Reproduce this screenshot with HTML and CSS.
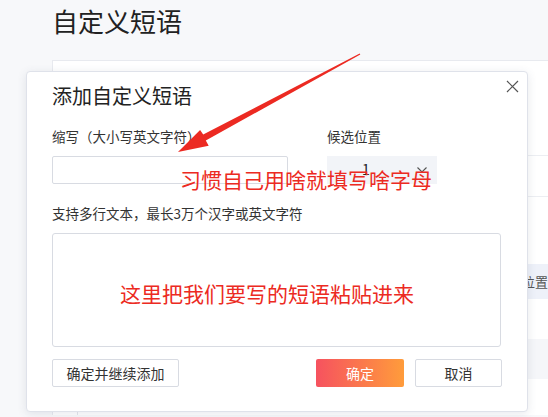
FILE: index.html
```html
<!DOCTYPE html>
<html lang="zh-CN">
<head>
<meta charset="utf-8">
<title>自定义短语</title>
<link rel="stylesheet" href="styles.css">
</head>
<body>
<div class="page">
  <h1 class="page-title">自定义短语</h1>
  <div class="card">
    <div class="card-toolbar"></div>
    <div class="card-row"></div>
    <div class="card-gap"></div>
    <div class="thead"><span class="th-cell">位置</span></div>
    <div class="tbody-row"></div>
    <div class="tbody-row alt"></div>
    <div class="tbody-row split"><span class="first-col"></span></div>
  </div>
</div>

<div class="dialog">
  <button class="dialog-close" aria-label="关闭">
    <svg width="13" height="13" viewBox="0 0 13 13"><path d="M1 1L12 12M12 1L1 12" stroke="#555" stroke-width="1.2" fill="none"/></svg>
  </button>
  <h2 class="dialog-title">添加自定义短语</h2>
  <div class="field-row">
    <div class="field field-abbr">
      <label class="field-label">缩写<span class="paren">（</span>大小写英文字符<span class="paren">）</span></label>
      <input class="text-input" type="text">
    </div>
    <div class="field field-pos">
      <label class="field-label">候选位置</label>
      <div class="select">
        <span class="select-value">1</span>
        <svg class="select-arrow" width="10" height="6" viewBox="0 0 10 6"><path d="M0.5 0.5L5 5L9.5 0.5" stroke="#555" stroke-width="1.1" fill="none"/></svg>
      </div>
    </div>
  </div>
  <label class="field-label label-content">支持多行文本，最长3万个汉字或英文字符</label>
  <textarea class="text-area"></textarea>
  <div class="dialog-footer">
    <button class="btn">确定并继续添加</button>
    <div class="btn-group">
      <button class="btn btn-primary">确定</button>
      <button class="btn btn-cancel">取消</button>
    </div>
  </div>
</div>

<svg class="annot-arrow" width="548" height="417" viewBox="0 0 548 417">
  <polygon points="360.3,54.6 359.7,53.4 203.2,134.6 200.1,129.9 178,152 208.7,145.7 205.8,140.4" fill="#ec2a22"/>
</svg>
<div class="note note-abbr">习惯自己用啥就填写啥字母</div>
<div class="note note-content">这里把我们要写的短语粘贴进来</div>
</body>
</html>
```

FILE: styles.css
```css
* { box-sizing: border-box; }
html, body {
  margin: 0;
  padding: 0;
  width: 548px;
  height: 417px;
  overflow: hidden;
}
body {
  background: #f7f8fa;
  font-family: "Noto Sans CJK SC", "Noto Sans", sans-serif;
  color: #333;
  position: relative;
}
.page {
  padding: 4px 0 0 52px;
}
.page-title {
  margin: 0 0 22px;
  font-size: 26px;
  line-height: 34px;
  font-weight: 400;
  color: #222;
}
.card {
  width: 496px;
  background: #fff;
  border: 1px solid #e8eaef;
  border-right: none;
  border-bottom: none;
}
.card-toolbar { height: 95px; border-bottom: 1px solid #eceef2; }
.card-row { height: 41px; border-bottom: 1px solid #eceef2; }
.card-gap { height: 67px; }
.thead {
  height: 35px;
  background: #eef1f9;
  display: flex;
  align-items: center;
  padding-left: 469px;
  font-size: 13px;
  color: #555;
  white-space: nowrap;
}
.tbody-row { height: 40px; }
.tbody-row.alt { background: #f5f6f9; }
.tbody-row.split { display: flex; height: 36px; }
.first-col { width: 25px; border-right: 1px solid #e4e6eb; }

.dialog {
  position: absolute;
  left: 26px;
  top: 71px;
  width: 502px;
  height: 341px;
  background: #fff;
  border: 1px solid #dfe2ea;
  border-radius: 4px;
  box-shadow: 0 2px 10px rgba(60, 70, 110, 0.12);
  padding: 10px 25px 0;
  display: flex;
  flex-direction: column;
}
.dialog-close {
  position: absolute;
  top: 8px;
  right: 8px;
  width: 13px;
  height: 13px;
  padding: 0;
  border: none;
  background: none;
  display: flex;
}
.dialog-title {
  margin: 0;
  font-size: 20px;
  line-height: 28px;
  font-weight: 400;
  color: #222;
}
.field-row {
  display: flex;
  gap: 39px;
  margin-top: 16px;
}
.field { display: flex; flex-direction: column; }
.field-abbr { width: 236px; }
.field-pos { width: 110px; }
.field-label {
  display: block;
  font-size: 13.5px;
  line-height: 20px;
  color: #333;
  margin-bottom: 10px;
  white-space: nowrap;
}
.paren {
  display: inline-block;
  width: 1em;
  text-align: center;
}
.text-input {
  height: 28px;
  width: 100%;
  border: 1px solid #d8dbe2;
  border-radius: 2px;
  background: #fff;
  outline: none;
}
.select {
  height: 28px;
  background: #f2f4f8;
  display: flex;
  align-items: center;
  justify-content: space-between;
  padding: 0 10px 0 35px;
  font-size: 14px;
  color: #222;
}
.select-value { line-height: 1; margin-top: -3px; }
.label-content { margin-top: 19px; }
.text-area {
  width: 449px;
  height: 114px;
  border: 1px solid #d8dbe2;
  border-radius: 3px;
  resize: none;
  outline: none;
  background: #fff;
}
.dialog-footer {
  margin-top: 12px;
  display: flex;
  justify-content: space-between;
}
.btn-group { display: flex; gap: 11px; }
.btn {
  height: 28px;
  width: 127px;
  border: 1px solid #d8dbe2;
  border-radius: 2px;
  background: #fff;
  font-family: "Noto Sans CJK SC", "Noto Sans", sans-serif;
  font-size: 14px;
  color: #333;
  padding: 0;
}
.btn-primary {
  width: 88px;
  border: none;
  color: #fff;
  background: linear-gradient(90deg, #f6525f, #ff9c3b);
}
.btn-cancel { width: 87px; }

.annot-arrow {
  position: absolute;
  left: 0;
  top: 0;
  pointer-events: none;
}
.note {
  position: absolute;
  font-size: 21px;
  line-height: 21px;
  color: #ec2a22;
  white-space: nowrap;
}
.note-abbr { left: 180px; top: 169px; }
.note-content { left: 120px; top: 283px; }
```
